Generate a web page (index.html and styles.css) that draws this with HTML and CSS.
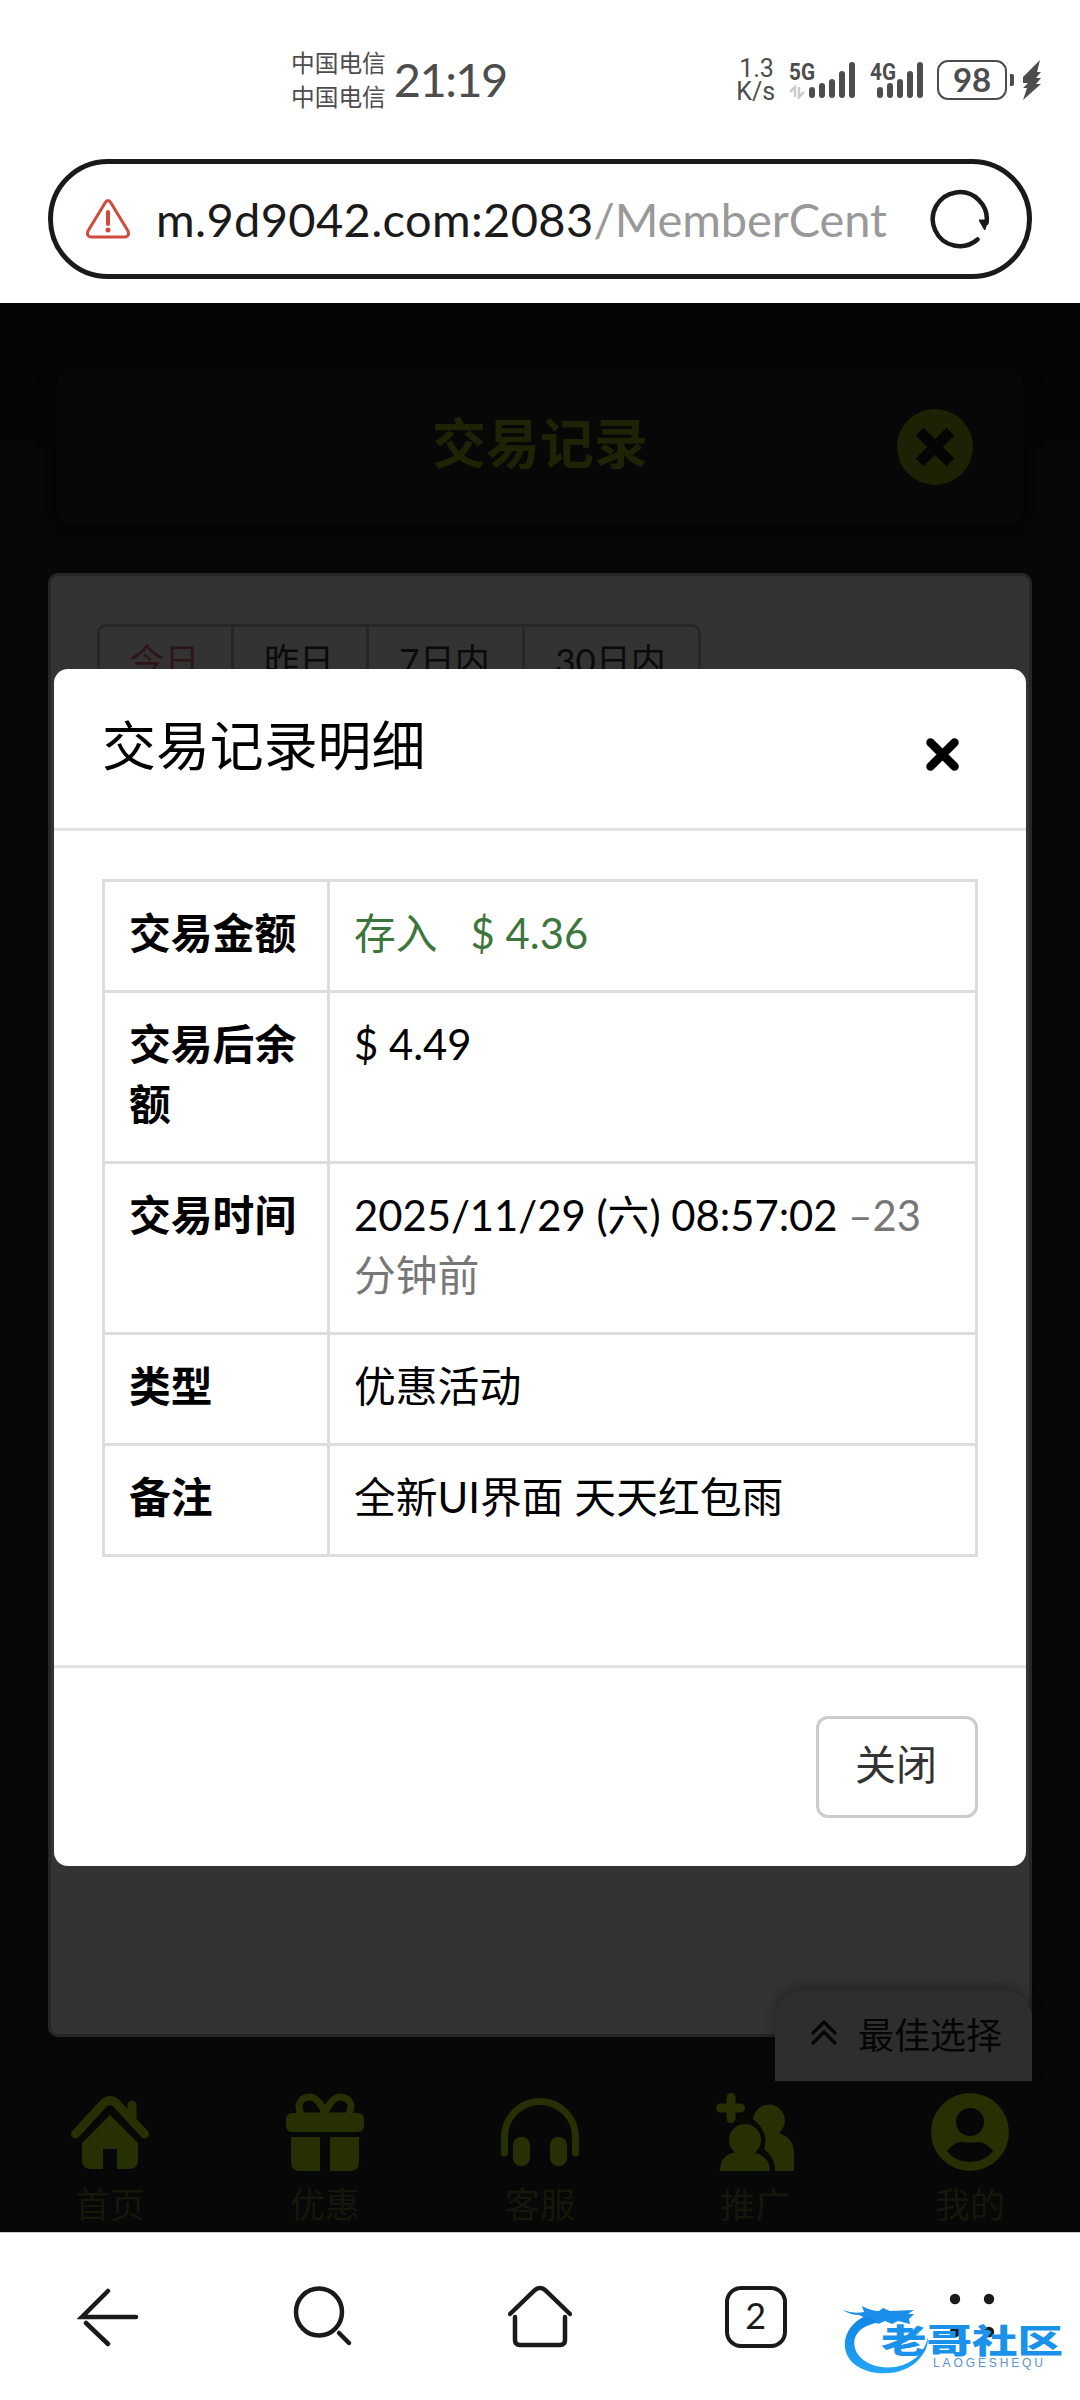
FILE: index.html
```html
<!DOCTYPE html>
<html lang="zh-CN">
<head>
<meta charset="utf-8">
<title>交易记录</title>
<link rel="stylesheet" href="styles.css">
</head>
<body>
<header class="status">
  <div class="carriers"><span>中国电信</span><span>中国电信</span></div>
  <div class="clock">21:19</div>
  <div class="speed"><span>1.3</span><span>K/s</span></div>
  <svg class="signals" width="136" height="40" viewBox="0 0 136 40">
    <text class="net" x="0" y="20" textLength="26" lengthAdjust="spacingAndGlyphs">5G</text>
    <path d="M1 32l5-5v10M10 27v10l5-5" fill="none" stroke="#ccc" stroke-width="2.5"/>
    <g class="bars">
      <path d="M23 30v5M33 26v9M43 22v13M53 14v21M63 5v30"/>
      <path d="M91 30v5M101 26v9M111 22v13M121 14v21M131 5v30"/>
    </g>
    <text class="net" x="81" y="20" textLength="26" lengthAdjust="spacingAndGlyphs">4G</text>
  </svg>
  <div class="battery">98</div>
  <svg class="bolt" width="32" height="40" viewBox="0 0 32 40">
    <path d="M1 14h2q2 0 2 2v8q0 2-2 2H1z M31 0L14 17v6h5l-5 5h4L14 40 32 24h-5l5-6h-5l5-6h-4z"/>
  </svg>
</header>

<div class="address">
  <svg width="44" height="40" viewBox="0 0 44 40" fill="none" stroke="#cf4a3a" stroke-width="3" stroke-linejoin="round" stroke-linecap="round">
    <path d="M19 4q3-5 6 0l17 28q2 6-4 6H6q-6 0-4-6z"/><path d="M22 13v12" stroke-width="4"/><path d="M22 31v.1" stroke-width="5"/>
  </svg>
  <div class="url">m.9d9042.com:2083<span class="path">/MemberCent</span></div>
  <svg class="reload" width="60" height="60" viewBox="0 0 60 60">
    <path d="M47.500 50.500A27 27 0 1 1 56.500 34" fill="none" stroke="#1a1a1a" stroke-width="4.500" stroke-linecap="round"/>
    <path d="M49 30.500h9.500L55.500 40.500q-.8 1-1.600 0L49 32z" fill="#1a1a1a"/>
  </svg>
</div>

<main class="app">
  <div class="title-bar">
    <h1>交易记录</h1>
    <svg class="title-close" width="76" height="76" viewBox="0 0 76 76">
      <circle cx="38" cy="38" r="38" fill="#1e2204"/>
      <path d="M26.500 26.500l23 23M49.500 26.500l-23 23" stroke="#040606" stroke-width="11" stroke-linecap="square"/>
    </svg>
  </div>
  <section class="panel">
    <div class="ranges">
      <span class="range active">今日</span><span class="range">昨日</span><span class="range wide">7日内</span><span class="range widest">30日内</span>
    </div>
  </section>
  <div class="best">
    <svg width="26" height="26" viewBox="0 0 26 26" fill="none" stroke="#050505" stroke-width="3.200"><path d="M1 14L13 2l12 12M1 24l12-12 12 12"/></svg>
    <span>最佳选择</span>
  </div>
  <nav class="tabs">
    <div class="tab"><svg viewBox="0 0 78 78"><path d="M4.500 41L33 10q6-5 12 0l28.500 31M61 12v14" fill="none" stroke="#282f03" stroke-width="9" stroke-linecap="round" stroke-linejoin="round"/><path d="M39 22l28 28v17q0 9-9 9H46V56H32v20H20q-9 0-9-9V50z" fill="#282f03"/></svg><span>首页</span></div>
    <div class="tab"><svg viewBox="0 0 78 78"><path d="M39 20Q32 4 24 4q-9 0-11 8 0 6 3 11h46q3-5 3-11-2-8-11-8-8 0-15 16z" fill="none" stroke="#282f03" stroke-width="7"/><rect y="20" width="78" height="19" rx="6" fill="#282f03"/><path d="M5 44h29v34H14q-9 0-9-9zM44 44h29v25q0 9-9 9H44z" fill="#282f03"/></svg><span>优惠</span></div>
    <div class="tab"><svg viewBox="0 0 78 78"><path d="M3.500 60V44a35.500 35.500 0 0 1 71 0v16" fill="none" stroke="#282f03" stroke-width="7" stroke-linecap="round"/><rect x="12" y="44" width="17" height="29" rx="8" fill="#282f03"/><rect x="49" y="44" width="17" height="29" rx="8" fill="#282f03"/></svg><span>客服</span></div>
    <div class="tab"><svg viewBox="0 0 78 78"><path d="M15 4.500v21M4.500 15h20" stroke="#282f03" stroke-width="9" stroke-linecap="round"/><path d="M37 26a16 16 0 1 1 26 14q15 5 15 20v18H59q0-14-11-22 6-16-11-30z" fill="#282f03"/><circle cx="29" cy="47" r="16" fill="#282f03"/><path d="M4 78q0-17 17-19h16q17 4 17 19z" fill="#282f03"/></svg><span>推广</span></div>
    <div class="tab"><svg viewBox="0 0 78 78"><path fill-rule="evenodd" d="M39 0a39 39 0 1 1 0 78 39 39 0 0 1 0-78zM39 15a14 14 0 1 0 0 28 14 14 0 0 0 0-28zM16 58q8 11 23 11t23-11q-8-10-16-9-7 1.500-14 0-8-1-16 9z" fill="#282f03"/></svg><span>我的</span></div>
  </nav>

  <div class="modal">
    <div class="modal-head">
      <h2>交易记录明细</h2>
      <svg width="33" height="33" viewBox="0 0 33 33"><path d="M4.500 4.500l24 24M28.500 4.500l-24 24" stroke="#000" stroke-width="8.500" stroke-linecap="round"/></svg>
    </div>
    <div class="modal-body">
      <table class="detail">
        <tr><th>交易金额</th><td class="income">存入<span class="amount">$ 4.36</span></td></tr>
        <tr><th>交易后余额</th><td>$ 4.49</td></tr>
        <tr><th>交易时间</th><td>2025/11/29 (六) 08:57:02 <span class="ago">–23<br>分钟前</span></td></tr>
        <tr><th>类型</th><td>优惠活动</td></tr>
        <tr><th>备注</th><td>全新UI界面 天天红包雨</td></tr>
      </table>
    </div>
    <div class="modal-foot"><button class="close-btn">关闭</button></div>
  </div>
</main>

<footer class="toolbar">
  <div class="tool"><svg viewBox="0 0 64 64"><path d="M31 6L5 32h54M9 38l22 21"/></svg></div>
  <div class="tool"><svg viewBox="0 0 64 64"><ellipse cx="27" cy="27" rx="23" ry="23.500"/><path d="M47 48l10 10"/></svg></div>
  <div class="tool"><svg viewBox="0 0 64 64"><path d="M2 29L27 5q5-4 10 0l25 24M7 32v23q0 5 5 5h40q5 0 5-5V32"/></svg></div>
  <div class="tool"><span class="count">2</span></div>
  <div class="tool"><svg class="dots" viewBox="0 0 64 64"><circle cx="16" cy="14" r="5.200"/><circle cx="50" cy="14" r="5.200"/><circle cx="16" cy="47" r="5.200"/><circle cx="50" cy="47" r="5.200"/></svg></div>
  <svg class="brand" width="226" height="76" viewBox="0 0 226 76">
    <defs><linearGradient id="sky" x1="0" y1="0" x2="0" y2="1"><stop offset="0" stop-color="#0f83e4"/><stop offset="1" stop-color="#22a6f6"/></linearGradient></defs>
    <path d="M30 9C4 14-7 42 10 58c17 15 52 14 67-5 6-7 8-13 8-21-3 14-12 23-25 28-17 6-38 1-46-12C6 33 16 19 40 17z" fill="url(#sky)"/>
    <path d="M0 5q10 4 21 2l-2-6q9 5 17 5l4-3 7 3 24-1-6 4 6 0-5 5 1 5-12-3-6 3-7-3-7 3-4-5q-10-1-15-4Q7 10 0 5z" fill="#1b8deb"/>
    <text class="brand-cn" transform="translate(38 48) scale(1.380 1)" x="0" y="0">老哥社区</text>
    <text class="brand-en" x="90" y="62" textLength="110">LAOGESHEQU</text>
  </svg>
</footer>
</body>
</html>
```
FILE: styles.css
```css
* { box-sizing: border-box; }
body {
  margin: 0;
  width: 1080px;
  height: 2400px;
  display: flex;
  flex-direction: column;
  overflow: hidden;
  background: #fff;
  color: #000;
  font-family: Lato, "Noto Sans CJK SC", sans-serif;
}
h1, h2 { margin: 0; }
svg { display: block; flex: none; }

.status {
  height: 159px;
  padding: 46px 39px 0 291px;
  display: flex;
  align-items: flex-start;
  color: #4d4d4d;
}
.carriers { width: 103px; display: flex; flex-direction: column; font-size: 23.700px; line-height: 34px; }
.clock { width: 343px; margin-top: 8px; font-size: 47px; line-height: 50px; letter-spacing: -1.600px; }
.speed { width: 53px; margin-top: 11px; display: flex; flex-direction: column; font: 25px/23px Roboto, sans-serif; }
.speed span:first-child { padding-left: 3px; }
.signals { margin: 14px 12px 0 0; overflow: visible; }
.net { font: bold 24px Roboto, sans-serif; fill: #4d4d4d; }
.bars path { stroke: #4d4d4d; stroke-width: 6; stroke-linecap: round; }
.battery {
  width: 70px;
  height: 40px;
  margin: 14px 2px 0 0;
  border: 2.500px solid #4d4d4d;
  border-radius: 11px;
  text-align: center;
  font-size: 33px;
  line-height: 35px;
  font-weight: bold;
}
.bolt { margin-top: 14px; fill: #4d4d4d; }

.address {
  height: 120px;
  margin: 0 48px 24px;
  padding: 0 37px 0 33px;
  border: 5px solid #1a1a1a;
  border-radius: 60px;
  display: flex;
  align-items: center;
}
.url {
  width: 732px;
  margin-left: 26px;
  overflow: hidden;
  white-space: nowrap;
  font-size: 47px;
  line-height: 64px;
  letter-spacing: .35px;
  color: #1a1a1a;
}
.path { color: #999; letter-spacing: -.1px; }
.reload { margin-left: auto; }

.app {
  position: relative;
  height: 1929px;
  flex: none;
  display: flex;
  flex-direction: column;
  background: linear-gradient(#050505 0 144px, #050807 144px);
}
.title-bar {
  height: 157px;
  margin: 65px 57px 48px;
  padding: 0 50px;
  display: grid;
  grid-template-columns: 76px 1fr 76px;
  align-items: center;
  border-radius: 16px;
  background: #050807;
  box-shadow: 0 4px 16px 2px #030404;
}
.title-bar h1 { grid-column: 2; text-align: center; font-size: 54px; line-height: 60px; padding-bottom: 6px; color: #1f2306; }
.panel {
  height: 1464px;
  margin: 0 48px;
  padding: 48px 46px;
  border: 3px solid #262626;
  border-radius: 10px;
  background: #333;
}
.ranges { display: inline-flex; height: 86px; border: 3px solid #272727; border-radius: 9px; }
.range { width: 135px; padding: 5px 2px 0 0; text-align: center; font-size: 35px; line-height: 56px; color: #0a0a0a; border-right: 3px solid #272727; }
.range.active { width: 134px; color: #2f1518; }
.range.wide { width: 156px; }
.range.widest { width: 173px; border-right: 0; }

.best {
  position: absolute;
  left: 775px;
  top: 1687px;
  width: 257px;
  height: 91px;
  padding: 0 30px 6px 36px;
  display: flex;
  align-items: center;
  justify-content: space-between;
  border-radius: 28px 28px 0 0;
  background: #2e2e2e;
  box-shadow: 0 -4px 14px rgba(0, 0, 0, .3);
  font-size: 36px;
  color: #050505;
}
.tabs { margin-top: auto; padding: 0 2.500px 8px; display: grid; grid-template-columns: repeat(5, 1fr); }
.tab { display: flex; flex-direction: column; align-items: center; gap: 13px; font-size: 35px; line-height: 40px; color: #14180a; }
.tab svg { width: 78px; height: 78px; }

.modal {
  position: absolute;
  left: 54px;
  top: 366px;
  width: 972px;
  height: 1197px;
  display: flex;
  flex-direction: column;
  border-radius: 14px;
  background: #fff;
}
.modal-head {
  height: 162px;
  padding: 0 67px 0 48px;
  display: flex;
  align-items: center;
  justify-content: space-between;
  border-bottom: 3px solid #e5e5e5;
}
.modal-head h2 { font-size: 53.900px; line-height: 60px; font-weight: 400; padding-bottom: 7px; }
.modal-head svg { margin-top: 12px; }
.modal-body { flex: 1; padding: 48px; }
.detail { width: 876px; table-layout: fixed; border-collapse: collapse; font-size: 41.800px; line-height: 60px; }
.detail th, .detail td { padding: 21px 24px 27px; border: 3px solid #ddd; text-align: left; vertical-align: top; }
.detail th { width: 225px; padding-right: 20px; font-weight: bold; }
.income { color: #3c763d; }
.amount { margin-left: 33px; }
.ago { color: #777; }
.modal-foot { height: 201px; padding: 48px; display: flex; justify-content: flex-end; align-items: flex-start; border-top: 3px solid #e5e5e5; }
.close-btn {
  width: 162px;
  height: 102px;
  padding: 0 2px 10px 0;
  border: 3px solid #ccc;
  border-radius: 12px;
  background: #fff;
  color: #333;
  font: 41px/60px "Noto Sans CJK SC", sans-serif;
}

.toolbar {
  position: relative;
  height: 168px;
  padding: 0 1px;
  display: grid;
  grid-template-columns: repeat(5, 215.600px);
  align-items: center;
  border-top: 1px solid #ccc;
}
.tool { display: flex; justify-content: center; }
.tool svg { width: 64px; height: 64px; fill: none; stroke: #1a1a1a; stroke-width: 4.500; stroke-linecap: round; }
.tool .dots { fill: #1a1a1a; stroke: none; }
.count { width: 62px; height: 62px; border: 4.500px solid #1a1a1a; border-radius: 16px; text-align: center; font-size: 36px; line-height: 50px; color: #1a1a1a; }
.brand { position: absolute; left: 843px; top: 72px; }
.brand-cn { font: 900 33px "Noto Sans CJK SC", sans-serif; fill: #1a92ec; }
.brand-en { font: 12px "Liberation Sans", sans-serif; fill: #5a94c8; }
```
